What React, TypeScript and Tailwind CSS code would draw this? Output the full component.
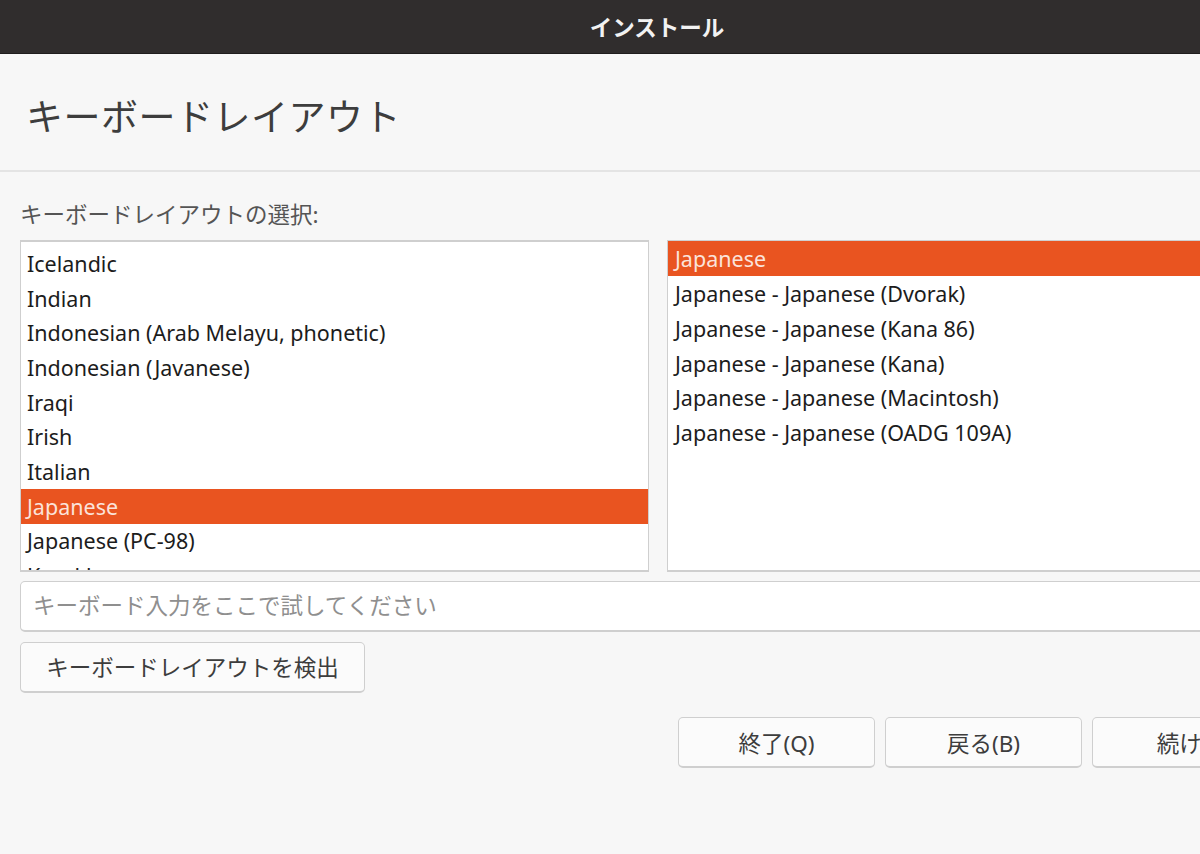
const font = "font-['Noto_Sans','Noto_Sans_CJK_JP',sans-serif]";

const leftItems = ["Icelandic", "Indian", "Indonesian (Arab Melayu, phonetic)", "Indonesian (Javanese)", "Iraqi", "Irish", "Italian", "Japanese", "Japanese (PC-98)", "Kazakh"];
const rightItems = ["Japanese", "Japanese - Japanese (Dvorak)", "Japanese - Japanese (Kana 86)", "Japanese - Japanese (Kana)", "Japanese - Japanese (Macintosh)", "Japanese - Japanese (OADG 109A)"];

function Row({ text, selected, className }: { text: string; selected: boolean; className: string }) {
  return (
    <div className={`h-[34.7px] shrink-0 flex items-center text-[21.5px] whitespace-nowrap ${className} ${selected ? "bg-[#e95420] text-[#fbe3da]" : "text-[#1c1c1c]"}`}>
      {text}
    </div>
  );
}

function Btn({ label, className }: { label: string; className: string }) {
  return (
    <button className={`h-[51px] shrink-0 rounded-[5px] border border-b-2 border-[#cfcfcf] bg-[#fbfbfb] text-[22.5px] text-[#3d3d3d] whitespace-nowrap ${className}`}>
      {label}
    </button>
  );
}

export default function App() {
  return (
    <div className={`${font} w-[1200px] h-[854px] overflow-hidden bg-[#f7f7f7] flex flex-col`}>
      <div className="w-[1314px] h-[54px] shrink-0 bg-[#302d2d] border-b border-[#1f1d1d] pt-[2px] flex items-center justify-center text-[22.5px] font-bold text-[#f2f2f2]">
        インストール
      </div>
      <div className="h-[118px] shrink-0 border-b-2 border-[#e4e4e4] pl-[26px] pt-[10px] flex items-center text-[37px] tracking-[0.5px] text-[#3d3d3d]">
        キーボードレイアウト
      </div>
      <div className="w-[1240px] pl-[20px] pr-[10px] flex flex-col">
        <div className="h-[68px] pb-[8px] flex items-end text-[22.5px] text-[#555555]">キーボードレイアウトの選択:</div>
        <div className="flex gap-[18px] h-[332px]">
          <div className="w-[629px] border-x border-y-2 border-[#cfcfcf] bg-white overflow-hidden pt-[4px] flex flex-col">
            {leftItems.map((t) => <Row key={t} text={t} selected={t === "Japanese"} className="pl-[6px] pt-[1.5px]" />)}
          </div>
          <div className="flex-1 border-x border-t border-b-2 border-[#cfcfcf] bg-white overflow-hidden flex flex-col">
            {rightItems.map((t, i) => <Row key={t} text={t} selected={i === 0} className={i === 0 ? "pl-[7px] pt-[1px]" : "pl-[7px] pt-[3px]"} />)}
          </div>
        </div>
        <div className="mt-[9px] h-[51px] rounded-[5px] border border-b-2 border-[#cfcfcf] bg-white pl-[12px] flex items-center text-[22.5px] text-[#8f8f8f]">
          キーボード入力をここで試してください
        </div>
        <div className="mt-[10px] flex">
          <Btn label="キーボードレイアウトを検出" className="w-[345px] pt-[1px]" />
        </div>
        <div className="mt-[24px] pl-[658px] flex gap-[10px]">
          <Btn label="終了(Q)" className="w-[197px] pt-[3px]" />
          <Btn label="戻る(B)" className="w-[197px] pt-[3px]" />
          <Btn label="続ける" className="w-[197px] pt-[3px]" />
        </div>
      </div>
    </div>
  );
}
